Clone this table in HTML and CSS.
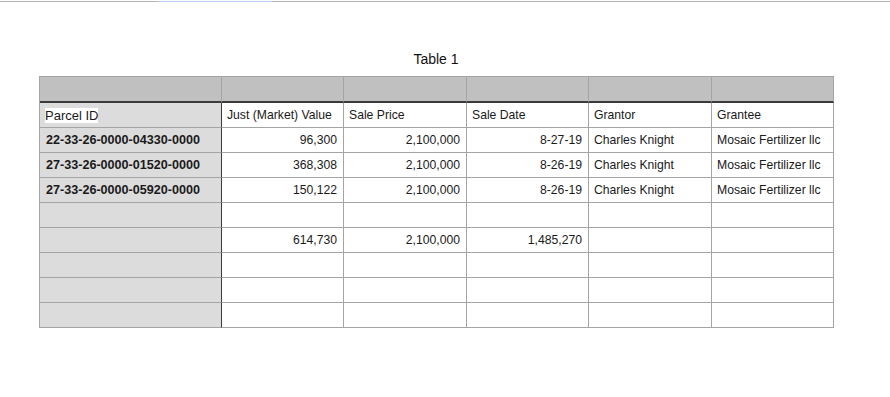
FILE: index.html
```html
<!DOCTYPE html>
<html>
<head>
<meta charset="utf-8">
<link rel="stylesheet" href="styles.css">
</head>
<body>
<div class="topbar"><div class="topbar-sel"></div></div>
<div class="title">Table 1</div>
<table class="grid">
  <colgroup>
    <col class="c1"><col class="c2"><col class="c3"><col class="c4"><col class="c5"><col class="c6">
  </colgroup>
  <thead>
    <tr class="hdr"><th class="first"></th><th></th><th></th><th></th><th></th><th></th></tr>
  </thead>
  <tbody>
    <tr class="r-first">
      <td class="first"><span class="sel">Parcel ID</span></td>
      <td>Just (Market) Value</td><td>Sale Price</td><td>Sale Date</td><td>Grantor</td><td>Grantee</td>
    </tr>
    <tr>
      <td class="first b">22-33-26-0000-04330-0000</td>
      <td class="num">96,300</td><td class="num">2,100,000</td><td class="num">8-27-19</td><td>Charles Knight</td><td>Mosaic Fertilizer llc</td>
    </tr>
    <tr>
      <td class="first b">27-33-26-0000-01520-0000</td>
      <td class="num">368,308</td><td class="num">2,100,000</td><td class="num">8-26-19</td><td>Charles Knight</td><td>Mosaic Fertilizer llc</td>
    </tr>
    <tr>
      <td class="first b">27-33-26-0000-05920-0000</td>
      <td class="num">150,122</td><td class="num">2,100,000</td><td class="num">8-26-19</td><td>Charles Knight</td><td>Mosaic Fertilizer llc</td>
    </tr>
    <tr><td class="first"></td><td></td><td></td><td></td><td></td><td></td></tr>
    <tr>
      <td class="first"></td>
      <td class="num">614,730</td><td class="num">2,100,000</td><td class="num">1,485,270</td><td></td><td></td>
    </tr>
    <tr><td class="first"></td><td></td><td></td><td></td><td></td><td></td></tr>
    <tr><td class="first"></td><td></td><td></td><td></td><td></td><td></td></tr>
    <tr><td class="first"></td><td></td><td></td><td></td><td></td><td></td></tr>
  </tbody>
</table>
</body>
</html>
```
FILE: styles.css
```css
html, body {
  margin: 0;
  padding: 0;
  background: #ffffff;
  font-family: "Liberation Sans", Arial, Helvetica, sans-serif;
  color: #1a1a1a;
}

.topbar {
  margin-top: 1px;
  height: 1px;
  background: #b4b4b4;
}

.topbar-sel {
  margin-left: 158px;
  width: 114px;
  height: 1px;
  background: #b9cdf0;
}

.title {
  margin-top: 49px;
  width: 872px;
  text-align: center;
  font-size: 14px;
  line-height: 16px;
  color: #111;
}

.grid {
  margin-top: 9px;
  margin-left: 39px;
  border-collapse: separate;
  border-spacing: 0;
  table-layout: fixed;
  width: 794px;
  border-top: 1px solid #a4a4a4;
  border-left: 1px solid #a4a4a4;
  font-size: 12.2px;
}

.c1 { width: 182px; }
.c2 { width: 122px; }
.c3 { width: 123px; }
.c4 { width: 122px; }
.c5 { width: 123px; }
.c6 { width: 122px; }

.grid th, .grid td {
  padding: 0 5px;
  height: 25px;
  border-right: 1px solid #a4a4a4;
  border-bottom: 1px solid #a4a4a4;
  text-align: left;
  vertical-align: middle;
  white-space: nowrap;
  overflow: hidden;
  font-weight: normal;
  line-height: 14px;
  box-sizing: border-box;
}

.hdr th {
  background: #bfc0bf;
  height: 26px;
  border-bottom: 2px solid #3a3a3a;
}

.grid .first {
  background: #dcdcdc;
  border-right: 1px solid #3a3a3a;
  padding-left: 5px;
}

.hdr th.first {
  background: #bfc0bf;
  border-right: 1px solid #a4a4a4;
}

.grid td.b {
  font-weight: bold;
  font-size: 12.6px;
  padding-left: 6px;
}

.grid td.num {
  text-align: right;
  padding-right: 6px;
}

.sel {
  background: #ffffff;
  font-size: 13px;
  padding: 1px 0 1px 0;
  display: inline-block;
  line-height: 13px;
}
```
